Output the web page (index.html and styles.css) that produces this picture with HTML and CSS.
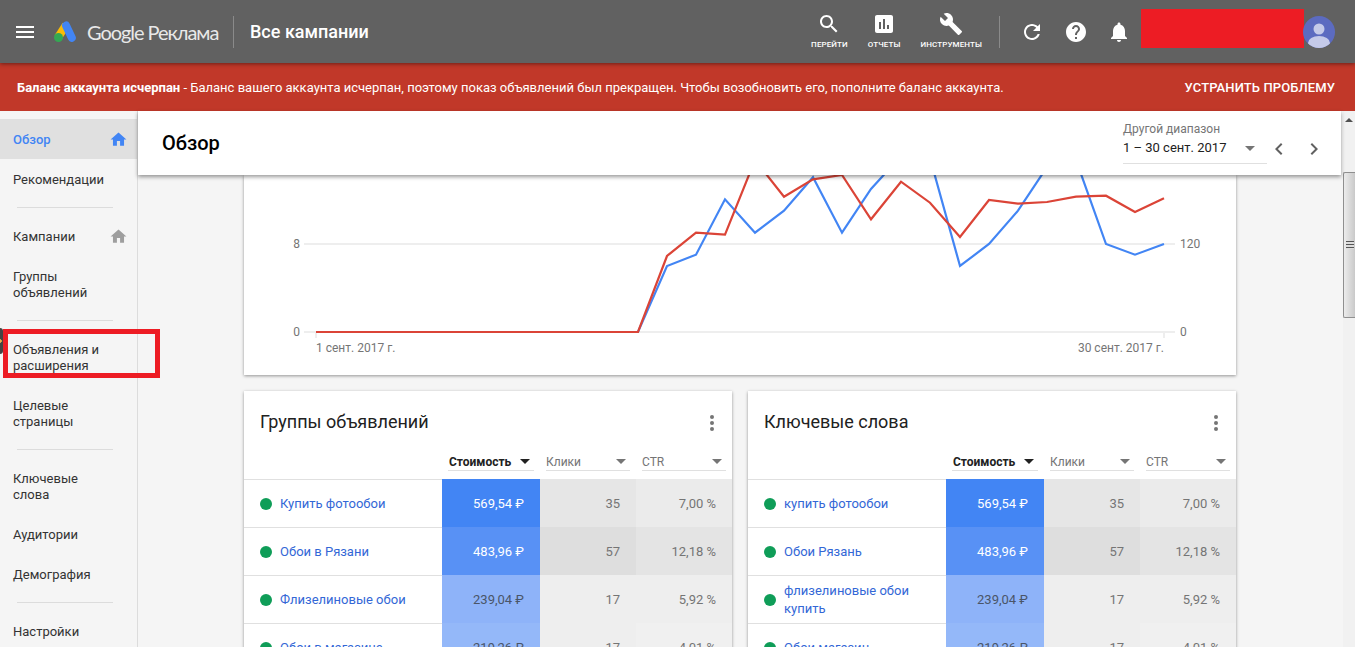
FILE: index.html
```html
<!DOCTYPE html>
<html lang="ru">

<head>
    <meta charset="UTF-8">
    <meta name="viewport" content="width=device-width, initial-scale=1.0">
    <title>Google Реклама - Обзор</title>
    <link rel="stylesheet" href="styles.css">
</head>

<body>
    <header class="topbar">
        <svg class="icon menu-icon" viewBox="0 0 24 24"><path d="M3 18h18v-2H3v2zm0-5h18v-2H3v2zm0-7v2h18V6H3z"/></svg>
        <svg class="logo-mark" viewBox="0 0 22 21">
            <line x1="12" y1="4" x2="4" y2="16.5" stroke="#fbbc04" stroke-width="8"/>
            <circle cx="4.5" cy="16.5" r="4.5" fill="#34a853"/>
            <line x1="12" y1="4.5" x2="17.8" y2="16.8" stroke="#4285f4" stroke-width="8" stroke-linecap="round"/>
        </svg>
        <span class="logo-text">Google Реклама</span>
        <span class="bar-divider bar-divider-left"></span>
        <span class="bar-title">Все кампании</span>

        <nav class="tools">
            <a class="tool">
                <svg class="icon" viewBox="0 0 24 24"><path d="M15.5 14h-.79l-.28-.27C15.41 12.59 16 11.11 16 9.5 16 5.91 13.09 3 9.5 3S3 5.91 3 9.5 5.91 16 9.5 16c1.61 0 3.09-.59 4.23-1.57l.27.28v.79l5 4.99L20.49 19l-4.99-5zm-6 0C7.01 14 5 11.99 5 9.5S7.01 5 9.5 5 14 7.01 14 9.5 11.99 14 9.5 14z"/></svg>
                <span>ПЕРЕЙТИ</span>
            </a>
            <a class="tool">
                <svg class="icon" viewBox="0 0 24 24"><path d="M19 3H5c-1.1 0-2 .9-2 2v14c0 1.1.9 2 2 2h14c1.1 0 2-.9 2-2V5c0-1.1-.9-2-2-2zM9 17H7v-7h2v7zm4 0h-2V7h2v10zm4 0h-2v-4h2v4z"/></svg>
                <span>ОТЧЕТЫ</span>
            </a>
            <a class="tool">
                <svg class="icon" viewBox="0 0 24 24"><path d="M22.7 19l-9.1-9.1c.9-2.3.4-5-1.5-6.9-2-2-5-2.4-7.4-1.3L9 6 6 9 1.6 4.7C.4 7.1.9 10.1 2.9 12.1c1.9 1.9 4.6 2.4 6.9 1.5l9.1 9.1c.4.4 1 .4 1.4 0l2.3-2.3c.5-.4.5-1.1.1-1.4z"/></svg>
                <span>ИНСТРУМЕНТЫ</span>
            </a>
        </nav>
        <span class="bar-divider bar-divider-right"></span>
        <div class="actions">
            <svg class="icon" viewBox="0 0 24 24"><path d="M17.65 6.35C16.2 4.9 14.21 4 12 4c-4.42 0-7.99 3.58-7.99 8s3.57 8 7.99 8c3.73 0 6.84-2.55 7.73-6h-2.08c-.82 2.33-3.04 4-5.65 4-3.31 0-6-2.69-6-6s2.69-6 6-6c1.66 0 3.14.69 4.22 1.78L13 11h7V4l-2.35 2.35z"/></svg>
            <svg class="icon" viewBox="0 0 24 24"><path d="M12 2C6.48 2 2 6.48 2 12s4.48 10 10 10 10-4.48 10-10S17.52 2 12 2zm1 17h-2v-2h2v2zm2.07-7.75l-.9.92C13.45 12.9 13 13.5 13 15h-2v-.5c0-1.1.45-2.1 1.17-2.83l1.24-1.26c.37-.36.59-.86.59-1.41 0-1.1-.9-2-2-2s-2 .9-2 2H8c0-2.21 1.79-4 4-4s4 1.79 4 4c0 .88-.36 1.68-.93 2.25z"/></svg>
            <svg class="icon" viewBox="0 0 24 24"><path d="M12 22c1.1 0 2-.9 2-2h-4c0 1.1.89 2 2 2zm6-6v-5c0-3.07-1.64-5.64-4.5-6.32V4c0-.83-.67-1.5-1.5-1.5s-1.5.67-1.5 1.5v.68C7.63 5.36 6 7.92 6 11v5l-2 2v1h16v-1l-2-2z"/></svg>
        </div>
        <div class="account-block"></div>
        <svg class="avatar" viewBox="0 0 32 32">
            <defs><clipPath id="avatarClip"><circle cx="16" cy="16" r="16"/></clipPath></defs>
            <circle cx="16" cy="16" r="16" fill="#5c6bc0"/>
            <g clip-path="url(#avatarClip)" fill="#c5cae9">
                <circle cx="16" cy="13" r="5.5"/>
                <ellipse cx="16" cy="27" rx="11" ry="7"/>
            </g>
        </svg>
    </header>

    <!-- Полоса с предупреждением -->
    <div class="banner">
        <p><b>Баланс аккаунта исчерпан</b> - Баланс вашего аккаунта исчерпан, поэтому показ объявлений был прекращен. Чтобы возобновить его, пополните баланс аккаунта.</p>
        <a class="banner-action">УСТРАНИТЬ ПРОБЛЕМУ</a>
    </div>

    <div class="layout">
        <aside class="sidebar">
            <a class="side-item active">Обзор
                <svg class="side-icon" viewBox="0 0 24 24"><path d="M10 20v-6h4v6h5v-8h3L12 3 2 12h3v8z"/></svg>
            </a>
            <a class="side-item">Рекомендации</a>
            <hr class="side-line">
            <a class="side-item">Кампании
                <svg class="side-icon" viewBox="0 0 24 24"><path d="M10 20v-6h4v6h5v-8h3L12 3 2 12h3v8z"/></svg>
            </a>
            <a class="side-item tall">Группы<br>объявлений</a>
            <hr class="side-line">
            <a class="side-item tall">Объявления и<br>расширения</a>
            <a class="side-item tall">Целевые<br>страницы</a>
            <hr class="side-line">
            <a class="side-item tall">Ключевые<br>слова</a>
            <a class="side-item">Аудитории</a>
            <a class="side-item">Демография</a>
            <hr class="side-line">
            <a class="side-item">Настройки</a>
        </aside>

        <main class="content">
            <div class="page-head">
                <h1>Обзор</h1>
                <div class="range">
                    <div class="range-label">Другой диапазон</div>
                    <div class="range-value">1 – 30 сент. 2017 <i class="caret"></i></div>
                </div>
                <svg class="chevron chevron-prev" viewBox="0 0 24 24"><path d="M15.41 7.41L14 6l-6 6 6 6 1.41-1.41L10.83 12z"/></svg>
                <svg class="chevron chevron-next" viewBox="0 0 24 24"><path d="M10 6L8.59 7.41 13.17 12l-4.58 4.59L10 18l6-6z"/></svg>
            </div>

            <div class="scroll-area">
                <section class="card chart-card">
                    <!-- viewBox совпадает с координатами страницы -->
                    <svg class="chart" viewBox="244 175 992 200">
                        <line class="grid" x1="304" y1="244" x2="1175" y2="244"/>
                        <line class="grid" x1="304" y1="332" x2="1175" y2="332"/>
                        <line class="tick" x1="316" y1="332" x2="316" y2="338"/>
                        <line class="tick" x1="1164" y1="332" x2="1164" y2="338"/>
                        <text class="axis" x="300" y="248" text-anchor="end">8</text>
                        <text class="axis" x="300" y="336" text-anchor="end">0</text>
                        <text class="axis" x="1180" y="248">120</text>
                        <text class="axis" x="1180" y="336">0</text>
                        <text class="axis" x="316" y="352">1 сент. 2017 г.</text>
                        <text class="axis" x="1164" y="352" text-anchor="end">30 сент. 2017 г.</text>
                        <polyline class="line-blue" points="316,332 638,332 667,266 696,254.7 725,199.3 755,232.7 784,210.7 813,177.3 842,232.7 871,189 901,156 930,158 960,266 989,244 1018,210.7 1047,167 1076,160 1106,244 1135,254.7 1164,244"/>
                        <polyline class="line-red" points="316,332 638,332 667,256 696,232.7 725,234.7 755,160 784,196.7 813,179.3 842,175 871,219.3 901,181.7 930,202.7 960,237 989,200 1018,203.7 1047,202 1076,196.7 1106,195.7 1135,212 1164,198.3"/>
                    </svg>
                </section>

                <div class="card-grid">
                    <section class="card">
                        <div class="card-head">
                            <h2>Группы объявлений</h2>
                            <span class="kebab"><i></i><i></i><i></i></span>
                        </div>
                        <div class="col-heads">
                            <div class="col-head sorted">Стоимость <i class="caret"></i></div>
                            <div class="col-head">Клики <i class="caret"></i></div>
                            <div class="col-head">CTR <i class="caret"></i></div>
                        </div>
                        <div class="row">
                            <div class="name"><i class="dot"></i><a>Купить фотообои</a></div>
                            <div class="cell cost c1">569,54 ₽</div>
                            <div class="cell clicks-a">35</div>
                            <div class="cell ctr-a">7,00 %</div>
                        </div>
                        <div class="row">
                            <div class="name"><i class="dot"></i><a>Обои в Рязани</a></div>
                            <div class="cell cost c2">483,96 ₽</div>
                            <div class="cell clicks-b">57</div>
                            <div class="cell ctr-b">12,18 %</div>
                        </div>
                        <div class="row">
                            <div class="name"><i class="dot"></i><a>Флизелиновые обои</a></div>
                            <div class="cell cost c3">239,04 ₽</div>
                            <div class="cell clicks-c">17</div>
                            <div class="cell ctr-c">5,92 %</div>
                        </div>
                        <div class="row">
                            <div class="name"><i class="dot"></i><a>Обои в магазине</a></div>
                            <div class="cell cost c4">219,26 ₽</div>
                            <div class="cell clicks-c">17</div>
                            <div class="cell ctr-d">4,01 %</div>
                        </div>
                    </section>

                    <section class="card">
                        <div class="card-head">
                            <h2>Ключевые слова</h2>
                            <span class="kebab"><i></i><i></i><i></i></span>
                        </div>
                        <div class="col-heads">
                            <div class="col-head sorted">Стоимость <i class="caret"></i></div>
                            <div class="col-head">Клики <i class="caret"></i></div>
                            <div class="col-head">CTR <i class="caret"></i></div>
                        </div>
                        <div class="row">
                            <div class="name"><i class="dot"></i><a>купить фотообои</a></div>
                            <div class="cell cost c1">569,54 ₽</div>
                            <div class="cell clicks-a">35</div>
                            <div class="cell ctr-a">7,00 %</div>
                        </div>
                        <div class="row">
                            <div class="name"><i class="dot"></i><a>Обои Рязань</a></div>
                            <div class="cell cost c2">483,96 ₽</div>
                            <div class="cell clicks-b">57</div>
                            <div class="cell ctr-b">12,18 %</div>
                        </div>
                        <div class="row">
                            <div class="name"><i class="dot"></i><a>флизелиновые обои купить</a></div>
                            <div class="cell cost c3">239,04 ₽</div>
                            <div class="cell clicks-c">17</div>
                            <div class="cell ctr-c">5,92 %</div>
                        </div>
                        <div class="row">
                            <div class="name"><i class="dot"></i><a>Обои магазин</a></div>
                            <div class="cell cost c4">219,26 ₽</div>
                            <div class="cell clicks-c">17</div>
                            <div class="cell ctr-d">4,01 %</div>
                        </div>
                    </section>
                </div>
            </div>
        </main>

        <div class="scrollbar">
            <i class="scroll-arrow"></i>
            <div class="scroll-thumb"><i></i></div>
        </div>
    </div>

    <!-- Пометки поверх скриншота -->
    <div class="mark-box"></div>
    <div class="edge-tab"></div>
</body>

</html>
```

FILE: styles.css
```css
* {
    box-sizing: border-box;
}

html,
body {
    height: 100%;
}

body {
    margin: 0;
    height: 647px;
    overflow: hidden;
    display: flex;
    flex-direction: column;
    font-family: Roboto, "Liberation Sans", sans-serif;
    background-color: #f5f5f5;
    color: #212121;
}

/* Верхняя панель */
.topbar {
    position: relative;
    z-index: 3;
    flex: none;
    height: 63px;
    display: flex;
    align-items: center;
    padding: 0 20px 0 13px;
    background-color: #616161;
    color: #fff;
    box-shadow: 0 1px 4px rgba(0, 0, 0, 0.45);
}

.icon {
    flex: none;
    display: block;
    width: 24px;
    height: 24px;
    fill: #fff;
}

.logo-mark {
    flex: none;
    width: 22px;
    height: 21px;
    margin-left: 17px;
}

.logo-text {
    width: 132px;
    margin-left: 11px;
    font-family: Lato, Roboto, sans-serif;
    font-size: 20px;
    letter-spacing: -1.05px;
    color: #e8e8e8;
    white-space: nowrap;
}

.bar-divider {
    flex: none;
    width: 1px;
    height: 32px;
    background-color: #8a8a8a;
}

.bar-divider-left {
    margin-left: 14px;
}

.bar-title {
    margin-left: 16px;
    font-size: 18px;
    font-weight: 500;
    white-space: nowrap;
}

.tools {
    margin-left: auto;
    display: flex;
    gap: 20px;
}

.tool {
    height: 63px;
    padding-top: 12px;
    display: flex;
    flex-direction: column;
    align-items: center;
}

.tool span {
    margin-top: 3px;
    font-size: 8px;
    font-weight: 500;
    letter-spacing: 0.1px;
    line-height: 12px;
    white-space: nowrap;
}

.bar-divider-right {
    margin-left: 17px;
}

.actions {
    margin-left: 20px;
    display: flex;
    gap: 19.5px;
}

.account-block {
    flex: none;
    width: 163px;
    height: 39px;
    margin-left: 10px;
    margin-top: -6px;
    background-color: #ed1c24;
}

.avatar {
    flex: none;
    width: 32px;
    height: 32px;
    margin-left: -1px;
}

/* Красная полоса */
.banner {
    flex: none;
    height: 48px;
    display: flex;
    align-items: center;
    justify-content: space-between;
    padding: 0 20px 0 17px;
    background-color: #c13829;
    color: #fff;
    font-size: 13px;
}

.banner p {
    margin: 0;
}

.banner-action {
    font-weight: 500;
    letter-spacing: 0.1px;
}

.layout {
    flex: 1;
    min-height: 0;
    display: flex;
}

/* Левое меню */
.sidebar {
    flex: none;
    width: 138px;
    padding-top: 8px;
    border-right: 1px solid #dcdcdc;
    font-size: 13px;
    color: #333;
}

.side-item {
    height: 40px;
    padding: 2px 9px 0 13px;
    display: flex;
    align-items: center;
    justify-content: space-between;
    line-height: 16px;
}

.side-item.tall {
    display: block;
    height: 56px;
    padding-top: 13px;
}

.side-item.active {
    background-color: #e0e0e0;
    color: #4285f4;
    font-weight: 500;
}

.side-icon {
    width: 19px;
    height: 19px;
    margin-top: -2px;
    fill: #9e9e9e;
}

.active .side-icon {
    fill: #4285f4;
}

.side-line {
    height: 1px;
    margin: 8px 24px 8px 17px;
    border: 0;
    background-color: #dcdcdc;
}

/* Основная часть */
.content {
    flex: 1;
    min-width: 0;
    display: flex;
    flex-direction: column;
}

.page-head {
    position: relative;
    z-index: 2;
    flex: none;
    height: 64px;
    margin-right: 2px;
    display: flex;
    align-items: flex-start;
    padding-right: 15px;
    background-color: #fff;
    box-shadow: 0 2px 4px rgba(0, 0, 0, 0.4);
}

.page-head h1 {
    margin: 0 auto 0 24px;
    font-size: 20px;
    font-weight: 500;
    line-height: 64px;
    color: #000;
}

.range {
    width: 144px;
    padding: 10px 0 5px;
    border-bottom: 1px solid #e0e0e0;
}

.range-label {
    font-size: 12px;
    line-height: 16px;
    color: #757575;
}

.range-value {
    display: flex;
    align-items: center;
    justify-content: space-between;
    padding: 1px 12px 0 0;
    font-size: 13px;
    line-height: 20px;
    color: #212121;
}

.caret {
    flex: none;
    width: 0;
    height: 0;
    border-left: 5px solid transparent;
    border-right: 5px solid transparent;
    border-top: 5px solid #757575;
}

.chevron {
    flex: none;
    width: 24px;
    height: 24px;
    margin-top: 26px;
    fill: #616161;
}

.chevron-next {
    margin-left: 11px;
}

.scroll-area {
    flex: 1;
    min-height: 0;
    overflow: hidden;
    padding-left: 106px;
}

.card {
    width: 488px;
    background-color: #fff;
    box-shadow: 0 1px 3px rgba(0, 0, 0, 0.4);
}

.chart-card {
    width: 992px;
    height: 200px;
}

.chart {
    display: block;
    width: 992px;
    height: 200px;
}

.grid,
.tick {
    stroke: #eeeeee;
    stroke-width: 2;
}

.axis {
    font-family: Roboto, sans-serif;
    font-size: 12px;
    fill: #757575;
}

.line-blue,
.line-red {
    fill: none;
    stroke-width: 2.2;
}

.line-blue {
    stroke: #4285f4;
}

.line-red {
    stroke: #db4437;
}

.card-grid {
    width: 992px;
    margin-top: 16px;
    display: flex;
    gap: 16px;
}

.card-head {
    height: 62px;
    display: flex;
    align-items: center;
    justify-content: space-between;
    padding: 0 16px;
}

.card-head h2 {
    margin: -2px 0 0;
    font-size: 18px;
    font-weight: 400;
    color: #212121;
}

.kebab {
    display: flex;
    flex-direction: column;
    gap: 2px;
    margin-top: 2px;
    margin-right: 2px;
}

.kebab i {
    width: 4px;
    height: 4px;
    border-radius: 50%;
    background-color: #757575;
}

.col-heads {
    height: 26px;
    padding-left: 204px;
    display: flex;
    align-items: flex-start;
    gap: 12px;
}

.col-head {
    width: 84px;
    height: 18px;
    display: flex;
    align-items: center;
    justify-content: space-between;
    padding: 0 4px 0 0;
    border-bottom: 1px solid #e0e0e0;
    font-size: 12px;
    color: #757575;
}

.col-head.sorted {
    width: 86px;
    padding-left: 1px;
    font-weight: 700;
    color: #212121;
}

.sorted .caret {
    border-top-color: #212121;
}

.row {
    height: 48px;
    display: flex;
    font-size: 13px;
}

.name {
    width: 198px;
    display: flex;
    align-items: center;
    gap: 8px;
    padding: 0 24px 0 16px;
    border-top: 1px solid #e0e0e0;
    line-height: 18px;
    color: #3367d6;
}

.dot {
    flex: none;
    width: 12px;
    height: 12px;
    border-radius: 50%;
    background-color: #0f9d58;
}

.cell {
    width: 96px;
    display: flex;
    align-items: center;
    justify-content: flex-end;
    padding-right: 16px;
    color: #757575;
}

.cost {
    width: 98px;
}

.c1 {
    background-color: #4285f4;
    color: #fff;
}

.c2 {
    background-color: #5891f5;
    color: #fff;
}

.c3 {
    background-color: #8eb3f9;
    color: #4a5568;
}

.c4 {
    background-color: #94b8f9;
    color: #4a5568;
}

.clicks-a {
    background-color: #e6e6e6;
}

.clicks-b {
    background-color: #dedede;
}

.clicks-c {
    background-color: #eeeeee;
}

.ctr-a {
    background-color: #ebebeb;
}

.ctr-b {
    background-color: #e4e4e4;
}

.ctr-c {
    background-color: #eeeeee;
}

.ctr-d {
    background-color: #f0f0f0;
}

/* Полоса прокрутки */
.scrollbar {
    flex: none;
    width: 12px;
    background-color: #f1f1f1;
    display: flex;
    flex-direction: column;
    align-items: center;
}

.scroll-arrow {
    width: 0;
    height: 0;
    margin-top: 7px;
    border-left: 4px solid transparent;
    border-right: 4px solid transparent;
    border-bottom: 4px solid #505050;
}

.scroll-thumb {
    width: 12px;
    height: 146px;
    margin-top: 50px;
    display: flex;
    align-items: center;
    justify-content: center;
    border: 1px solid #8f8f8f;
    border-right: 0;
    border-radius: 2px 0 0 2px;
    background: linear-gradient(to right, #ececec, #c9c9c9);
}

.scroll-thumb i {
    width: 8px;
    height: 8px;
    background: repeating-linear-gradient(to bottom, #555 0, #555 1px, #ddd 1px, #ddd 3px);
}

/* Красная рамка-пометка */
.mark-box {
    position: absolute;
    z-index: 4;
    left: 3px;
    top: 329px;
    width: 157px;
    height: 49px;
    border: 5px solid #ed1c24;
}

.edge-tab {
    position: absolute;
    z-index: 4;
    left: 0;
    top: 328px;
    width: 3px;
    height: 26px;
    border-radius: 0 3px 3px 0;
    background: radial-gradient(circle at 0 13px, #e8b04a 1.5px, #444 2px);
}
```
